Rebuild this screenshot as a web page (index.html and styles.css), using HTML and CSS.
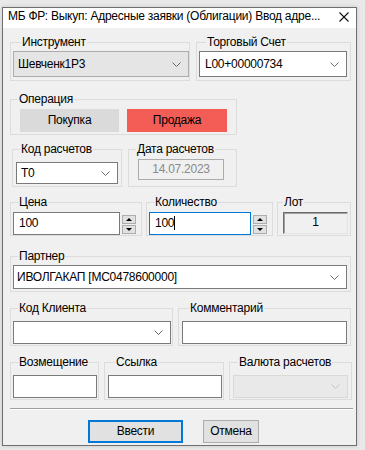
FILE: index.html
```
<!DOCTYPE html>
<html>
	<head>
		<meta charset="utf-8">
		<title>МБ ФР: Выкуп</title>
		<link rel="stylesheet" href="styles.css">
	</head>
	<body>
		<div class="window">
			<div class="titlebar">
				<span class="title">МБ ФР: Выкуп: Адресные заявки (Облигации) Ввод адре...</span>
				<svg class="close" width="10" height="10" viewBox="0 0 10 10"><path d="M0.5 0.5L9.5 9.5M9.5 0.5L0.5 9.5" stroke="#111" stroke-width="1.1" fill="none"/></svg>
			</div>
			<div class="content">
				<!-- инструмент / счет -->
				<div class="row r1">
					<fieldset class="grp g-instr">
						<legend class="lg-instr">Инструмент</legend>
						<div class="combo combo-gray c-instr"><span>Шевченк1Р3</span><svg class="chev" width="9" height="5" viewBox="0 0 9 5"><path d="M0.5 0.5L4.5 4.5L8.5 0.5" stroke="#6a6a6a" fill="none"/></svg></div>
					</fieldset>
					<fieldset class="grp g-acc">
						<legend class="lg-acc">Торговый Счет</legend>
						<div class="combo c-acc"><span>L00+00000734</span><svg class="chev" width="9" height="5" viewBox="0 0 9 5"><path d="M0.5 0.5L4.5 4.5L8.5 0.5" stroke="#6a6a6a" fill="none"/></svg></div>
					</fieldset>
				</div>
				<!-- операция -->
				<div class="row r2">
					<fieldset class="grp g-oper">
						<legend>Операция</legend>
						<div class="oper">
							<div class="op-btn op-buy">Покупка</div>
							<div class="op-btn op-sell">Продажа</div>
						</div>
					</fieldset>
				</div>
				<!-- расчеты -->
				<div class="row r3">
					<fieldset class="grp g-code">
						<legend>Код расчетов</legend>
						<div class="combo c-code"><span>Т0</span><svg class="chev" width="9" height="5" viewBox="0 0 9 5"><path d="M0.5 0.5L4.5 4.5L8.5 0.5" stroke="#6a6a6a" fill="none"/></svg></div>
					</fieldset>
					<fieldset class="grp g-date">
						<legend>Дата расчетов</legend>
						<div class="field-dis c-date">14.07.2023</div>
					</fieldset>
				</div>
				<!-- цена / количество / лот -->
				<div class="row r4">
					<fieldset class="grp g-price">
						<legend>Цена</legend>
						<div class="spin-field">
							<div class="edit e-price">100</div>
							<div class="spin"><div class="spin-btn"><span class="tri-up"></span></div><div class="spin-btn"><span class="tri-down"></span></div></div>
						</div>
					</fieldset>
					<fieldset class="grp g-qty">
						<legend>Количество</legend>
						<div class="spin-field">
							<div class="edit edit-focus e-qty">100<span class="caret"></span></div>
							<div class="spin"><div class="spin-btn"><span class="tri-up"></span></div><div class="spin-btn"><span class="tri-down"></span></div></div>
						</div>
					</fieldset>
					<fieldset class="grp g-lot">
						<legend class="lg-lot">Лот</legend>
						<div class="lot-box">1</div>
					</fieldset>
				</div>
				<!-- партнер -->
				<div class="row r5">
					<fieldset class="grp g-partner">
						<legend>Партнер</legend>
						<div class="combo c-partner"><span>ИВОЛГАКАП [MC0478600000]</span><svg class="chev" width="9" height="5" viewBox="0 0 9 5"><path d="M0.5 0.5L4.5 4.5L8.5 0.5" stroke="#6a6a6a" fill="none"/></svg></div>
					</fieldset>
				</div>
				<!-- клиент / комментарий -->
				<div class="row r6">
					<fieldset class="grp g-client">
						<legend>Код Клиента</legend>
						<div class="combo c-client"><span></span><svg class="chev" width="9" height="5" viewBox="0 0 9 5"><path d="M0.5 0.5L4.5 4.5L8.5 0.5" stroke="#6a6a6a" fill="none"/></svg></div>
					</fieldset>
					<fieldset class="grp g-comment">
						<legend class="lg-comment">Комментарий</legend>
						<div class="edit e-comment"></div>
					</fieldset>
				</div>
				<!-- возмещение / ссылка / валюта -->
				<div class="row r7">
					<fieldset class="grp g-refund">
						<legend>Возмещение</legend>
						<div class="edit e-refund"></div>
					</fieldset>
					<fieldset class="grp g-link">
						<legend class="lg-link">Ссылка</legend>
						<div class="edit e-link"></div>
					</fieldset>
					<fieldset class="grp g-cur">
						<legend>Валюта расчетов</legend>
						<div class="combo combo-dis c-cur"><span></span><svg class="chev" width="9" height="5" viewBox="0 0 9 5"><path d="M0.5 0.5L4.5 4.5L8.5 0.5" stroke="#c4c4c4" fill="none"/></svg></div>
					</fieldset>
				</div>
			</div>
			<div class="sep"></div>
			<div class="buttons">
				<div class="btn btn-default">Ввести</div>
				<div class="btn btn-cancel">Отмена</div>
			</div>
		</div>
	</body>
</html>
```
FILE: styles.css
```
*{
	padding: 0;
	margin: 0;
	box-sizing: border-box;
}
html,body{
	width:100%;
	height:100%;
}
body{
	background:#e9e9e9;
	font-family:"Liberation Sans", Arial, sans-serif;
	font-size:12px;
	letter-spacing:-0.25px;
	color:#000;
	overflow:hidden;
}
.window{
	width:355px;
	height:439px;
	margin:7px 0 0 2px;
	border:1px solid #6f6f6f;
	background:#f0f0f0;
	box-shadow:0 0 4px rgba(0,0,0,0.15);
}
.titlebar{
	height:20px;
	background:#fff;
	display:flex;
	align-items:flex-start;
	padding-left:5px;
}
.title{
	line-height:17px;
	white-space:nowrap;
}
.close{
	flex:none;
	margin:4px 7px 0 auto;
}
.content{
	padding:0 4px 0 7px;
}
.row{
	display:flex;
}
.r1{ margin-top:6px; gap:6px; }
.r2{ margin-top:10px; }
.r3{ margin-top:6px; gap:6px; padding-left:2px; }
.r4{ margin-top:7px; gap:4px; }
.r5{ margin-top:12px; }
.r6{ margin-top:8px; gap:5px; }
.r7{ margin-top:8px; gap:5px; }

.grp{
	border:1px solid #dcdcdc;
	padding:0 0 0 2px;
	min-width:0;
}
.grp legend{
	margin-left:5px;
	padding:0 1px;
	line-height:16px;
	height:16px;
}
.lg-instr{ margin-left:8px !important; }
.lg-acc{ margin-left:7px !important; }
.lg-lot{ margin-left:3px !important; }
.lg-comment{ margin-left:7px !important; }
.lg-link{ margin-left:8px !important; }

/* размеры групп */
.g-instr{ width:180px; padding-bottom:3px; }
.g-acc{ width:155px; padding-bottom:3px; }
.g-oper{ width:227px; padding-bottom:2px; }
.g-code{ width:110px; padding-bottom:2px; }
.g-date{ width:109px; }
.g-price{ width:132px; }
.g-qty{ width:127px; }
.g-lot{ width:74px; }
.g-partner{ width:341px; padding-bottom:2px; }
.g-client{ width:163px; padding-bottom:1px; }
.g-comment{ width:173px; padding-left:3px; }
.g-refund{ width:89px; padding-bottom:1px; }
.g-link{ width:120px; }
.g-cur{ width:123px; padding-left:3px; }

/* комбобоксы */
.combo{
	display:flex;
	align-items:center;
	justify-content:space-between;
	background:#fff;
	border:1px solid #7a7a7a;
	padding:0 7px 0 4px;
	white-space:nowrap;
}
.combo-gray{
	background:#e5e5e5;
	border-color:#adadad;
}
.combo-dis{
	background:#e9e9e9;
	border-color:#d9d9d9;
}
.chev{
	flex:none;
}
.c-instr{ margin-top:1px; height:26px; width:176px; }
.c-acc{ margin-top:1px; height:26px; width:148px; padding-left:5px; }
.c-code{ margin-top:5px; height:22px; width:102px; margin-left:1px; }
.c-partner{ margin-top:1px; height:24px; width:334px; padding-left:3px; }
.c-client{ margin-top:5px; height:23px; width:158px; }
.c-cur{ margin-top:5px; height:23px; width:115px; }

/* операция */
.oper{
	display:flex;
	gap:8px;
	padding-left:7px;
	margin-top:2px;
}
.op-btn{
	height:23px;
	line-height:23px;
	text-align:center;
}
.op-buy{
	width:99px;
	background:#dadada;
}
.op-sell{
	width:100px;
	background:#f45d56;
}

/* поля ввода */
.edit{
	background:#fff;
	border:1px solid #7a7a7a;
	height:23px;
	line-height:21px;
	padding-left:5px;
	margin-top:2px;
}
.edit-focus{
	border-color:#0078d7;
}
.caret{
	display:inline-block;
	width:1px;
	height:14px;
	background:#000;
	vertical-align:-3px;
}
.field-dis{
	border:1px solid #adadad;
	background:#f0f0f0;
	color:#8a8a8a;
	text-align:center;
	height:21px;
	line-height:19px;
}
.c-date{ margin-top:2px; margin-left:7px; width:86px; }
.e-price{ width:107px; }
.e-qty{ width:102px; }
.e-comment{ width:165px; margin-top:5px; }
.e-refund{ width:84px; margin-top:5px; }
.e-link{ width:114px; margin-top:5px; margin-left:1px; }

.spin-field{
	display:flex;
	align-items:center;
	gap:2px;
}
.spin{
	margin-top:3px;
	display:flex;
	flex-direction:column;
	gap:1px;
}
.spin-btn{
	width:14px;
	height:9px;
	background:#e1e1e1;
	border:1px solid #adadad;
	display:flex;
	align-items:center;
	justify-content:center;
}
.tri-up{
	width:0;
	height:0;
	border-left:3px solid transparent;
	border-right:3px solid transparent;
	border-bottom:3px solid #000;
}
.tri-down{
	width:0;
	height:0;
	border-left:3px solid transparent;
	border-right:3px solid transparent;
	border-top:3px solid #000;
}
.lot-box{
	margin:2px 0 0 3px;
	width:65px;
	height:22px;
	line-height:19px;
	text-align:center;
	background:#f0f0f0;
	border-top:1px solid #6d6d6d;
	border-left:1px solid #6d6d6d;
	border-right:1px solid #e3e3e3;
	border-bottom:1px solid #e3e3e3;
	box-shadow:inset 1px 1px 0 #a0a0a0;
}

/* низ окна */
.sep{
	margin:8px 0 0 7px;
	width:343px;
	height:2px;
	border-top:1px solid #a0a0a0;
	border-bottom:1px solid #fff;
}
.buttons{
	display:flex;
	margin-top:10px;
	padding-left:85px;
	gap:20px;
}
.btn{
	height:23px;
	background:#e1e1e1;
	text-align:center;
}
.btn-default{
	width:95px;
	border:2px solid #0078d7;
	line-height:19px;
}
.btn-cancel{
	width:56px;
	border:1px solid #adadad;
	line-height:21px;
}
```
